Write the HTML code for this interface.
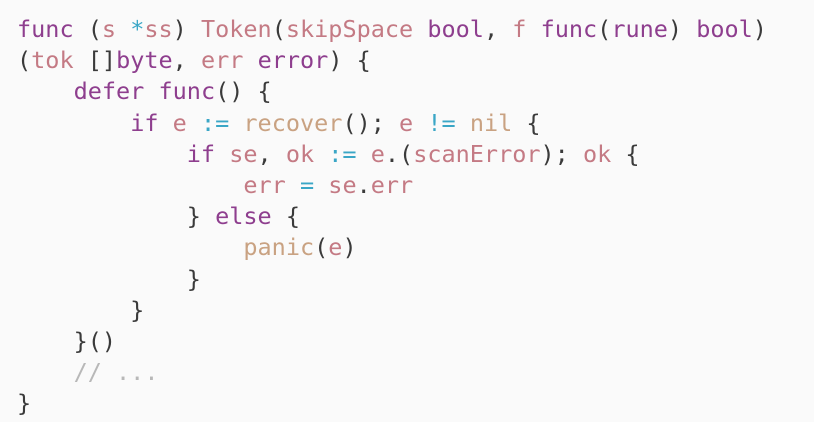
<!DOCTYPE html>
<html><head><meta charset="utf-8"><style>
html,body{margin:0;padding:0;background:#fafafa;width:814px;height:422px;overflow:hidden}
pre{margin:0;position:absolute;left:17px;top:14px;font-family:"DejaVu Sans Mono",monospace;font-size:23.5px;line-height:31.2px;color:#3a3a3a;letter-spacing:0}
.k{color:#8e3e8e}.i{color:#c47a84}.o{color:#3aa6c6}.b{color:#c9a282}.c{color:#b8b8b8}
</style></head><body>
<pre><span class="k">func</span> (<span class="i">s</span> <span class="o">*</span><span class="i">ss</span>) <span class="i">Token</span>(<span class="i">skipSpace</span> <span class="k">bool</span>, <span class="i">f</span> <span class="k">func</span>(<span class="k">rune</span>) <span class="k">bool</span>)
(<span class="i">tok</span> []<span class="k">byte</span>, <span class="i">err</span> <span class="k">error</span>) {
    <span class="k">defer</span> <span class="k">func</span>() {
        <span class="k">if</span> <span class="i">e</span> <span class="o">:=</span> <span class="b">recover</span>(); <span class="i">e</span> <span class="o">!=</span> <span class="b">nil</span> {
            <span class="k">if</span> <span class="i">se</span>, <span class="i">ok</span> <span class="o">:=</span> <span class="i">e</span>.(<span class="i">scanError</span>); <span class="i">ok</span> {
                <span class="i">err</span> <span class="o">=</span> <span class="i">se</span>.<span class="i">err</span>
            } <span class="k">else</span> {
                <span class="b">panic</span>(<span class="i">e</span>)
            }
        }
    }()
    <span class="c">// ...</span>
}</pre>
</body></html>
